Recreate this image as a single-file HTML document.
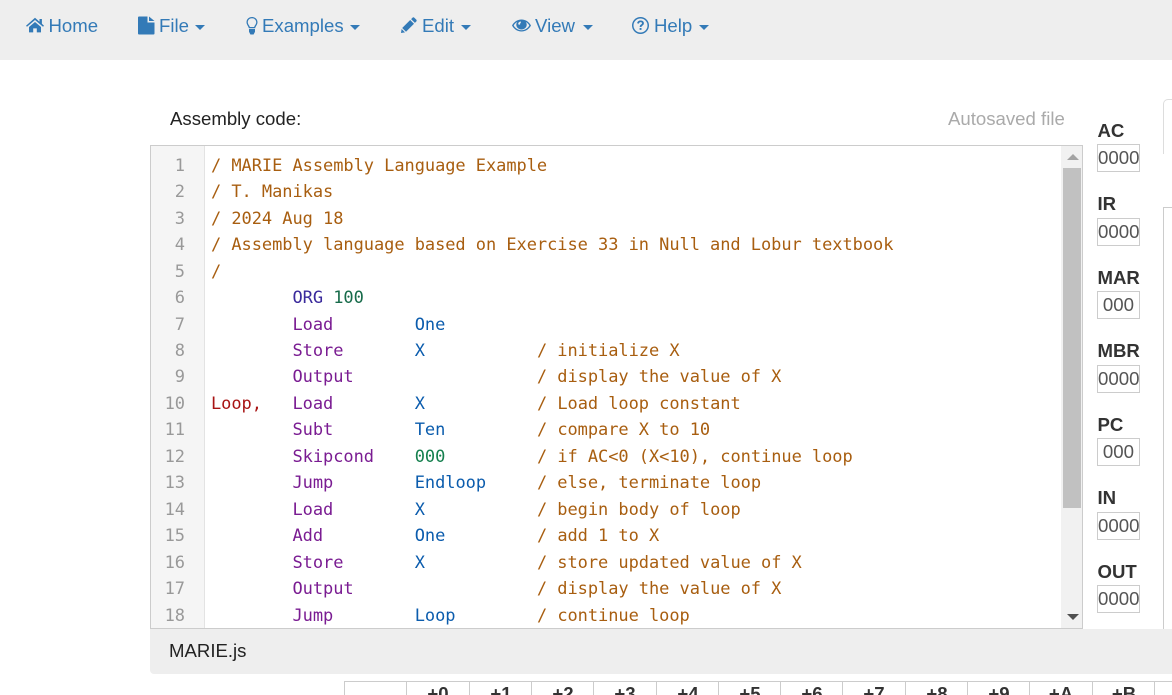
<!DOCTYPE html>
<html><head><meta charset="utf-8">
<style>
html,body{margin:0;padding:0;background:#fff}
#p{position:relative;width:1172px;height:695px;overflow:hidden;font-family:"Liberation Sans",Arial,sans-serif;color:#222}
.a{position:absolute}
.nav{left:0;top:0;width:1172px;height:60px;background:#eee}
.n{position:absolute;top:15px;font-size:18.6px;line-height:22px;color:#337ab7;white-space:nowrap}
.c{position:absolute;top:25px;width:0;height:0;border-left:5.5px solid transparent;border-right:5.5px solid transparent;border-top:5.5px solid #337ab7}
svg.i{position:absolute;fill:#337ab7}
.ln{position:absolute;width:34px;left:151px;text-align:right;color:#999;font:17px/26px "DejaVu Sans Mono",monospace;letter-spacing:-.03px}
.l{position:absolute;left:211px;white-space:pre;font:17px/26px "DejaVu Sans Mono",monospace;color:#a85e10;letter-spacing:-.05px}
.k{color:#7a1c92}.v{color:#0b5cad}.o{color:#3a2a9c}.g{color:#16804f}.r{color:#a81414}.h{color:#176b4a}
.rl{position:absolute;left:1097.5px;font-size:18.6px;line-height:22px;font-weight:700;color:#333}
.rb{position:absolute;left:1097px;width:41px;height:26px;border:1px solid #ccc;text-align:center;font-size:18.67px;line-height:26px;color:#555;background:#fff}
.th{position:absolute;top:682px;height:20px;width:62px;font-size:18.6px;font-weight:700;line-height:24px;text-align:center;color:#333;border-left:1px solid #ccc}
</style></head><body><div id="p">
<div class="a nav"></div>

<svg class="i" style="left:26px;top:17px" width="18" height="16" viewBox="0 0 18 16"><path d="M9 .8 13.5 4.7V2h2.400v4.800L18 8.700l-1 1.100L9 3 1 9.800 0 8.700zM3 10l6-5 6 5v5.400h-4.200v-4H7.200v4H3z"/></svg>
<div class="n" style="left:48.500px">Home</div>

<svg class="i" style="left:138px;top:16px" width="17" height="19" viewBox="0 0 17 19"><path d="M0 1.500Q0 .5 1 .5H9.500V6.500H16.500V17.500Q16.500 18.500 15.500 18.500H1Q0 18.500 0 17.500zM11 .5 16.500 5H11z"/></svg>
<div class="n" style="left:159px">File</div><div class="c" style="left:195px"></div>

<svg class="i" style="left:246px;top:17px" width="12" height="18" viewBox="0 0 12 18"><path fill-rule="evenodd" d="M6 0C9.200 0 11.500 2.300 11.500 5.200c0 2.500-1.900 3.700-2.300 6H2.800C2.400 8.900.5 7.700.5 5.200.5 2.300 2.800 0 6 0zm0 1.300C3.600 1.300 1.800 3 1.800 5.200c0 1.900 1.500 3 2.100 4.800h4.200c.6-1.800 2.100-2.900 2.100-4.800C10.200 3 8.400 1.300 6 1.300zM3 12h6v2.800L7.600 17.500H4.400L3 14.800z"/></svg>
<div class="n" style="left:262px">Examples</div><div class="c" style="left:350px"></div>

<svg class="i" style="left:401px;top:17px" width="16" height="16" viewBox="0 0 16 16"><path d="M11.600.6Q12.400 0 13.200.6L15.400 2.800Q16 3.600 15.400 4.400L13.900 5.900 10.100 2.100zM9.200 3 13 6.800 5 14.800 1.200 11zM.6 12 4 15.400 0 16z"/></svg>
<div class="n" style="left:422px">Edit</div><div class="c" style="left:461px"></div>

<svg class="i" style="left:512px;top:19px" width="19" height="13" viewBox="0 0 19 13"><path fill-rule="evenodd" d="M9.500.5C13.800.5 17.400 3.300 19 6.500 17.400 9.700 13.800 12.500 9.500 12.500S1.600 9.700 0 6.500C1.600 3.300 5.200.5 9.500.5zM1.700 6.500C3.200 9.200 6 11.200 9.500 11.200s6.300-2 7.800-4.700C16.500 5 15.300 3.800 13.800 3c.6.800.9 1.800.9 2.800 0 2.700-2.300 4.700-5.200 4.700S4.300 8.500 4.300 5.800c0-1 .3-2 .9-2.800C3.700 3.800 2.500 5 1.700 6.500zM8 2.600C6.900 2.900 6.200 3.800 6.200 4.800c0 .6.500 1 1 1s1-.4 1-1c0-.5.200-.9.600-1.200.3-.3.100-1.300-.8-1z"/></svg>
<div class="n" style="left:535px">View</div><div class="c" style="left:582.500px"></div>

<svg class="i" style="left:632px;top:17px" width="17" height="17" viewBox="0 0 17 17"><path fill-rule="evenodd" d="M8.500 0a8.500 8.500 0 1 1 0 17 8.500 8.500 0 0 1 0-17zm0 1.500a7 7 0 1 0 0 14 7 7 0 0 0 0-14zM8.600 3.500c2 0 3.300 1.100 3.300 2.700 0 1.300-.8 1.900-1.600 2.500-.6.400-.8.700-.8 1.300H7.700c0-1.200.4-1.800 1.300-2.500.6-.4 1-.8 1-1.300 0-.7-.6-1.100-1.400-1.100-.9 0-1.500.5-1.700 1.500L5.100 6.300C5.400 4.500 6.700 3.500 8.600 3.500zM7.600 11h1.900v1.900H7.600z"/></svg>
<div class="n" style="left:654px">Help</div><div class="c" style="left:698.500px"></div>

<div class="a" style="left:170px;top:108px;font-size:18.6px;line-height:22px;color:#222">Assembly code:</div>
<div class="a" style="left:948px;top:108px;font-size:18.6px;line-height:22px;color:#aaa">Autosaved file</div>

<!-- editor -->
<div class="a" style="left:150px;top:145px;width:931px;height:482px;border:1px solid #ccc;box-sizing:content-box"></div>
<div class="a" style="left:151px;top:146px;width:53px;height:482px;background:#f5f5f5;border-right:1px solid #e3e3e3"></div>
<div class="a" style="left:1061px;top:146px;width:21px;height:482px;background:#f1f1f1"></div>
<div class="a" style="left:1063px;top:168px;width:18px;height:340px;background:#c1c1c1"></div>
<div class="a" style="left:1067px;top:154px;width:0;height:0;border-left:6px solid transparent;border-right:6px solid transparent;border-bottom:6px solid #a3a3a3"></div>
<div class="a" style="left:1067px;top:614px;width:0;height:0;border-left:6px solid transparent;border-right:6px solid transparent;border-top:6px solid #505050"></div>

<div class="ln" style="top:153px">1</div>
<div class="ln" style="top:179px">2</div>
<div class="ln" style="top:206px">3</div>
<div class="ln" style="top:232px">4</div>
<div class="ln" style="top:259px">5</div>
<div class="ln" style="top:285px">6</div>
<div class="ln" style="top:312px">7</div>
<div class="ln" style="top:338px">8</div>
<div class="ln" style="top:364px">9</div>
<div class="ln" style="top:391px">10</div>
<div class="ln" style="top:417px">11</div>
<div class="ln" style="top:444px">12</div>
<div class="ln" style="top:470px">13</div>
<div class="ln" style="top:497px">14</div>
<div class="ln" style="top:523px">15</div>
<div class="ln" style="top:550px">16</div>
<div class="ln" style="top:576px">17</div>
<div class="ln" style="top:603px">18</div>

<div class="l" style="top:153px">/ MARIE Assembly Language Example</div>
<div class="l" style="top:179px">/ T. Manikas</div>
<div class="l" style="top:206px">/ 2024 Aug 18</div>
<div class="l" style="top:232px">/ Assembly language based on Exercise 33 in Null and Lobur textbook</div>
<div class="l" style="top:259px">/</div>
<div class="l" style="top:285px">        <span class="o">ORG</span> <span class="h">100</span></div>
<div class="l" style="top:312px">        <span class="k">Load</span>        <span class="v">One</span></div>
<div class="l" style="top:338px">        <span class="k">Store</span>       <span class="v">X</span>           / initialize X</div>
<div class="l" style="top:364px">        <span class="k">Output</span>                  / display the value of X</div>
<div class="l" style="top:391px"><span class="r">Loop,</span>   <span class="k">Load</span>        <span class="v">X</span>           / Load loop constant</div>
<div class="l" style="top:417px">        <span class="k">Subt</span>        <span class="v">Ten</span>         / compare X to 10</div>
<div class="l" style="top:444px">        <span class="k">Skipcond</span>    <span class="g">000</span>         / if AC&lt;0 (X&lt;10), continue loop</div>
<div class="l" style="top:470px">        <span class="k">Jump</span>        <span class="v">Endloop</span>     / else, terminate loop</div>
<div class="l" style="top:497px">        <span class="k">Load</span>        <span class="v">X</span>           / begin body of loop</div>
<div class="l" style="top:523px">        <span class="k">Add</span>         <span class="v">One</span>         / add 1 to X</div>
<div class="l" style="top:550px">        <span class="k">Store</span>       <span class="v">X</span>           / store updated value of X</div>
<div class="l" style="top:576px">        <span class="k">Output</span>                  / display the value of X</div>
<div class="l" style="top:603px">        <span class="k">Jump</span>        <span class="v">Loop</span>        / continue loop</div>

<!-- registers -->
<div class="rl" style="top:120px">AC</div><div class="rb" style="top:144px">0000</div>
<div class="rl" style="top:193px">IR</div><div class="rb" style="top:218px">0000</div>
<div class="rl" style="top:267px">MAR</div><div class="rb" style="top:291px">000</div>
<div class="rl" style="top:340px">MBR</div><div class="rb" style="top:365px">0000</div>
<div class="rl" style="top:414px">PC</div><div class="rb" style="top:438px">000</div>
<div class="rl" style="top:487px">IN</div><div class="rb" style="top:512px">0000</div>
<div class="rl" style="top:561px">OUT</div><div class="rb" style="top:585px">0000</div>

<!-- right panels -->
<div class="a" style="left:1163px;top:99px;width:20px;height:54px;border:1px solid #ddd;border-bottom:none;border-radius:5px 0 0 0"></div>
<div class="a" style="left:1163px;top:207px;width:20px;height:422px;border-left:1px solid #ccc;border-top:1px solid #ccc;box-sizing:border-box"></div>

<!-- footer -->
<div class="a" style="left:150px;top:629px;width:1030px;height:45px;background:#eee;border-radius:0 0 0 4px"></div>
<div class="a" style="left:169px;top:640px;font-size:18.6px;line-height:22px;color:#222">MARIE.js</div>

<!-- table -->
<div class="a" style="left:344px;top:681px;width:828px;height:1px;background:#ccc"></div>
<div class="th" style="left:344px"></div>
<div class="th" style="left:406px">+0</div>
<div class="th" style="left:469px">+1</div>
<div class="th" style="left:531px">+2</div>
<div class="th" style="left:593px">+3</div>
<div class="th" style="left:656px">+4</div>
<div class="th" style="left:718px">+5</div>
<div class="th" style="left:780px">+6</div>
<div class="th" style="left:842px">+7</div>
<div class="th" style="left:905px">+8</div>
<div class="th" style="left:967px">+9</div>
<div class="th" style="left:1029px">+A</div>
<div class="th" style="left:1092px">+B</div>
<div class="th" style="left:1154px"></div>
</div></body></html>
